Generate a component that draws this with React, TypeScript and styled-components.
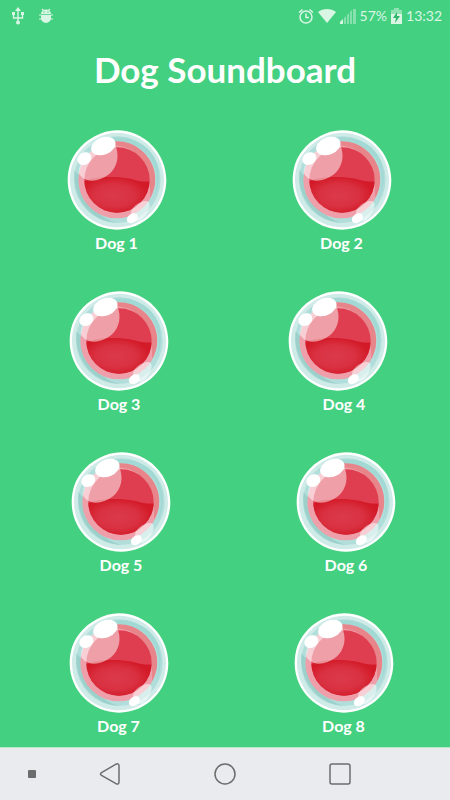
import React from "react";
import styled, { createGlobalStyle } from "styled-components";

const GlobalStyle = createGlobalStyle`
  * { box-sizing: border-box; }
  body { margin: 0; background: #44d081; }
  button { border: 0; padding: 0; background: none; color: inherit; font: inherit; cursor: pointer; }
  svg { display: block; }
`;

const Screen = styled.div`
  min-height: 100vh;
  display: flex;
  flex-direction: column;
  background: #44d081;
  color: #fff;
  font-family: Lato, "Open Sans", sans-serif;
`;

const StatusBar = styled.header`
  display: flex;
  justify-content: space-between;
  align-items: center;
  height: 32px;
  padding: 0 8px 0 11px;
  color: #d9f6e5;
  font-size: 14px;
  line-height: 20px;
`;

const StatusGroup = styled.div<{ $gap: number }>`
  display: flex;
  align-items: center;
  gap: ${(p) => p.$gap}px;
`;

const Title = styled.h1`
  margin: 0;
  padding: 13px 0 36px;
  text-align: center;
  font-size: 35px;
  line-height: 49px;
  font-weight: 700;
`;

const Board = styled.main`
  flex: 1;
  display: flex;
  flex-direction: column;
  gap: 35px;
  padding-bottom: 5px;
`;

const Row = styled.div<{ $inset: number }>`
  display: grid;
  grid-template-columns: 1fr 1fr;
  > * { padding-left: ${(p) => p.$inset}px; }
`;

const Cell = styled.div`
  display: flex;
  justify-content: center;
`;

const SoundButton = styled.button`
  display: flex;
  flex-direction: column;
  align-items: center;
`;

const Art = styled.span<{ $inset: number }>`
  padding-right: ${(p) => p.$inset}px;
`;

const Label = styled.span`
  font-size: 16px;
  line-height: 26px;
  font-weight: 700;
`;

const NavBar = styled.nav`
  display: grid;
  grid-template-columns: 52px 1fr 1fr 1fr 52px;
  height: 53px;
  background: #e9ebee;
  color: #6b6d6d;
  border-top: 1px solid #b9e8cd;
`;

const NavButton = styled.button`
  display: flex;
  align-items: center;
  justify-content: center;
`;

const DotButton = styled(NavButton)`
  width: 40px;
  justify-self: end;
`;

function Ball() {
  return (
    <svg width="100" height="100" viewBox="0 0 300 300" aria-hidden="true">
      <defs>
        <radialGradient id="glow" cx="0.45" cy="0.5" r="0.6">
          <stop offset="0" stopColor="#db3a4c" />
          <stop offset="0.5" stopColor="#d93141" />
          <stop offset="0.85" stopColor="#d31a28" />
          <stop offset="1" stopColor="#d31a28" />
        </radialGradient>
        <clipPath id="core"><circle cx="150" cy="150" r="98" /></clipPath>
      </defs>
      <path d="M150 1C232 1 298 70 298 151S232 299 150 299 2 232 2 151C2 113 14 82 31 62C58 28 104 1 150 1Z" fill="#fff" />
      <path d="M150 8C228 8 291 73 291 151S228 292 150 292 9 229 9 151C9 115 20 87 37 67C62 33 107 8 150 8Z" fill="#cfebe8" />
      <circle cx="151" cy="149" r="130" fill="#b1dedb" />
      <path d="M66 55C110 12 184 11 233 49C280 87 289 159 257 211C283 145 265 85 218 55C170 26 110 26 66 55Z" fill="#a2d9d5" />
      <path d="M23 121C13 200 69 274 150 279C91 263 48 212 42 145Z" fill="#9bd0cb" />
      <circle cx="149" cy="150" r="115" fill="#ef9fa9" />
      <path d="M105 44C170 14 243 54 261 119C270 157 261 183 249 204C254 135 230 59 158 48C139 45 121 47 105 51Z" fill="#e7858b" />
      <circle cx="150" cy="150" r="98" fill="#df3e50" />
      <path d="M50 154C85 138 150 138 190 146C214 153 234 156 252 154V252H50Z" fill="url(#glow)" clipPath="url(#core)" />
      <path d="M36 119C44 84 75 44 143 41C160 76 151 111 126 133C96 157 59 158 42 139C36 132 34 127 36 119Z" fill="#fff" opacity="0.5" />
      <ellipse cx="109" cy="48" rx="38" ry="26" transform="rotate(-22 109 48)" fill="#fff" />
      <ellipse cx="52" cy="86" rx="22" ry="18" transform="rotate(-32 52 86)" fill="#fff" />
      <path d="M192 252C190 232 222 209 242 214C256 222 243 254 221 270C208 277 194 270 192 252Z" fill="#fff" opacity="0.5" />
      <ellipse cx="196" cy="265" rx="18" ry="13" transform="rotate(-36 196 265)" fill="#fff" />
    </svg>
  );
}

function UsbIcon() {
  return (
    <svg width="14" height="18" viewBox="0 0 14 18" fill="none" stroke="currentColor" strokeWidth="1.4" aria-label="USB connected">
      <path d="M7 2v13M2.5 6v5h9v-5" />
      <path d="M7 0l3 4H4zM1 5h3v3H1zM10 5h3v3h-3z" fill="currentColor" stroke="none" />
      <circle cx="7" cy="15.500" r="2" fill="currentColor" stroke="none" />
    </svg>
  );
}

function BugIcon() {
  return (
    <svg width="16" height="16" viewBox="0 0 16 16" aria-label="Debugging">
      <path d="M4 1l2 2M12 1l-2 2M1 7h14M1 11h14" stroke="currentColor" strokeWidth="1.200" />
      <path d="M3 6a5 4.500 0 0 1 10 0v4a5 5 0 0 1-10 0z" fill="currentColor" />
      <path d="M3 6.500h10" stroke="#44d081" strokeWidth="0.800" />
      <circle cx="6" cy="4" r="0.700" fill="#44d081" />
      <circle cx="10" cy="4" r="0.700" fill="#44d081" />
    </svg>
  );
}

function AlarmIcon() {
  return (
    <svg width="16" height="17" viewBox="0 0 16 17" fill="none" stroke="currentColor" strokeWidth="1.500" aria-label="Alarm set">
      <circle cx="8" cy="9" r="6" />
      <path d="M8 5.500V9.500h3M1 4.500L4.500 1.500M15 4.500L11.500 1.500" />
    </svg>
  );
}

function WifiIcon() {
  return (
    <svg width="18" height="14" viewBox="0 0 18 14" aria-label="Wi-Fi">
      <path d="M0 3C5-1 13-1 18 3L9 14Z" fill="currentColor" />
    </svg>
  );
}

function SignalIcon() {
  return (
    <svg width="16" height="16" viewBox="0 0 16 16" aria-label="Mobile signal">
      <path d="M0 16v-2l3-3v5z" fill="currentColor" />
      <path d="M4 16v-6l2-2v8zM7 16V7l2-2v11zM10 16V4l2-2v14zM13 16V1h3v15z" fill="currentColor" opacity="0.45" />
    </svg>
  );
}

function BatteryIcon() {
  return (
    <svg width="11" height="16" viewBox="0 0 11 16" aria-label="Battery charging">
      <path d="M3 0h5v2h3v4H0V2h3z" fill="currentColor" opacity="0.5" />
      <path d="M0 6h11v10H0z" fill="currentColor" />
      <path d="M6 4L2 10h3l-1 5 5-7H6z" fill="#2fb66c" />
    </svg>
  );
}

const rows = [
  { inset: 8, sounds: [{ name: "Dog 1", art: 0 }, { name: "Dog 2", art: 0 }] },
  { inset: 13, sounds: [{ name: "Dog 3", art: 0 }, { name: "Dog 4", art: 13 }] },
  { inset: 17, sounds: [{ name: "Dog 5", art: 0 }, { name: "Dog 6", art: 0 }] },
  { inset: 12, sounds: [{ name: "Dog 7", art: 0 }, { name: "Dog 8", art: 0 }] },
];

export default function App() {
  return (
    <>
      <GlobalStyle />
      <Screen>
        <StatusBar>
          <StatusGroup $gap={13}>
            <UsbIcon />
            <BugIcon />
          </StatusGroup>
          <StatusGroup $gap={4}>
            <AlarmIcon />
            <WifiIcon />
            <SignalIcon />
            <span>57%</span>
            <BatteryIcon />
            <time>13:32</time>
          </StatusGroup>
        </StatusBar>
        <Title>Dog Soundboard</Title>
        <Board>
          {rows.map((row) => (
            <Row key={row.sounds[0].name} $inset={row.inset}>
              {row.sounds.map((sound) => (
                <Cell key={sound.name}>
                  <SoundButton type="button">
                    <Art $inset={sound.art}><Ball /></Art>
                    <Label>{sound.name}</Label>
                  </SoundButton>
                </Cell>
              ))}
            </Row>
          ))}
        </Board>
        <NavBar>
          <DotButton type="button" aria-label="Hide navigation bar">
            <svg width="8" height="8" viewBox="0 0 8 8"><rect width="8" height="8" rx="1" fill="currentColor" /></svg>
          </DotButton>
          <NavButton type="button" aria-label="Back">
            <svg width="22" height="22" viewBox="0 0 22 22" fill="none" stroke="currentColor" strokeWidth="1.500">
              <path d="M2.500 9.600L17 1.200Q20 0 20 3V19Q20 22 17 20.700L2.500 12.400Q.5 11 2.500 9.600Z" />
            </svg>
          </NavButton>
          <NavButton type="button" aria-label="Home">
            <svg width="22" height="22" viewBox="0 0 22 22" fill="none" stroke="currentColor" strokeWidth="1.500">
              <circle cx="11" cy="11" r="10" />
            </svg>
          </NavButton>
          <NavButton type="button" aria-label="Recent apps">
            <svg width="22" height="22" viewBox="0 0 22 22" fill="none" stroke="currentColor" strokeWidth="1.500">
              <rect x="1" y="1" width="20" height="20" rx="2" />
            </svg>
          </NavButton>
        </NavBar>
      </Screen>
    </>
  );
}
